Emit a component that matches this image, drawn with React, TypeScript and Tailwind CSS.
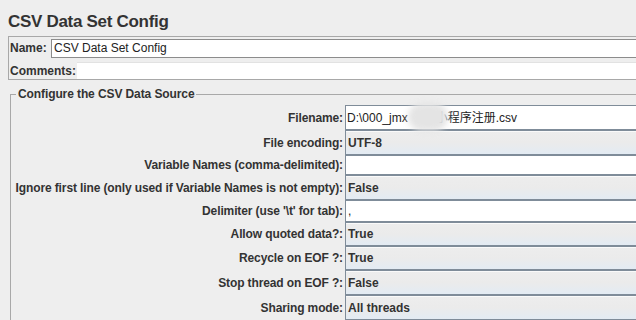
import React from "react";

type Row = {
  label: string;
  value: string;
  kind: "text" | "combo";
  h: string;
};

const rows: Row[] = [
  { label: "File encoding:", value: "UTF-8", kind: "combo", h: "h-[25px]" },
  { label: "Variable Names (comma-delimited):", value: "", kind: "text", h: "h-[20px]" },
  { label: "Ignore first line (only used if Variable Names is not empty):", value: "False", kind: "combo", h: "h-[25px]" },
  { label: "Delimiter (use '\\t' for tab):", value: ",", kind: "text", h: "h-[22px]" },
  { label: "Allow quoted data?:", value: "True", kind: "combo", h: "h-[24px]" },
  { label: "Recycle on EOF ?:", value: "True", kind: "combo", h: "h-[24px]" },
  { label: "Stop thread on EOF ?:", value: "False", kind: "combo", h: "h-[25px]" },
  { label: "Sharing mode:", value: "All threads", kind: "combo", h: "h-[25px]" },
];

const font = "font-['Liberation_Sans','Noto_Sans_CJK_SC',sans-serif]";

function Label({ children, h }: { children: React.ReactNode; h: string }) {
  return (
    <div className={`${h} flex items-center justify-end pr-[2px] text-[12px] font-bold tracking-[-0.12px] text-[#333] whitespace-nowrap`}>
      {children}
    </div>
  );
}

export default function App() {
  return (
    <div className={`w-[636px] h-[320px] overflow-hidden bg-[#eeeeee] ${font}`}>
      <div className="w-[680px]">
        <div className="h-[36px] pt-[10px] pl-[8px] text-[17px] leading-[24px] font-bold tracking-[-0.3px] text-[#333]">
          CSV Data Set Config
        </div>

        {/* name / comments */}
        <div className="ml-[8px] h-[44px] border border-r-0 border-[#a8a8a8]">
          <div className="h-[21px] flex items-center pt-[1px]">
            <span className="pl-[1px] w-[42px] text-[12px] font-bold text-[#333]">Name:</span>
            <div className="flex-1 h-[19px] border-y border-l border-[#8c8c8c] bg-white flex items-center pl-[2px] text-[12px] text-[#222]">
              CSV Data Set Config
            </div>
          </div>
          <div className="h-[21px] flex items-end">
            <span className="pl-[1px] w-[68px] pb-[1px] text-[12px] leading-[14px] font-bold text-[#333]">Comments:</span>
            <div className="flex-1 h-[17px] border-t border-[#e2e2e2] bg-white" />
          </div>
        </div>

        {/* csv data source */}
        <fieldset className="ml-[10px] mt-[7px] border border-r-0 border-[#a8a8a8]">
          <legend className="ml-[5px] px-[2px] text-[12px] leading-[14px] font-bold tracking-[-0.1px] text-[#333]">
            Configure the CSV Data Source
          </legend>
          <div className="pt-[4px] grid grid-cols-[334px_1fr]">
            <Label h="h-[25px]">Filename:</Label>
            <div className="relative h-[25px] border border-r-0 border-[#7f8c99] bg-white flex items-center pl-[1px] text-[12px] text-[#222] whitespace-nowrap">
              <span>D:\000_jmx</span>
              <span className="ml-[28px]">小程序注册.csv</span>
              <span className="absolute left-[62px] top-[-3px] w-[40px] h-[28px] rounded-full bg-[#e4e4e4] blur-[3px]" />
            </div>
            {rows.map((r) => (
              <React.Fragment key={r.label}>
                <Label h={r.h}>{r.label}</Label>
                {r.kind === "text" ? (
                  <div className={`${r.h} border border-r-0 border-[#7f8c99] bg-white flex items-center pl-[2px] text-[12px] text-[#222]`}>
                    {r.value}
                  </div>
                ) : (
                  <div className={`${r.h} border border-r-0 border-[#7f8c99] bg-gradient-to-b from-[#ededed] via-[#ebebeb] to-[#e3ebf3] shadow-[inset_0_1px_0_#fafafa] flex items-center pl-[2px] text-[12px] font-bold text-[#333]`}>
                    {r.value}
                  </div>
                )}
              </React.Fragment>
            ))}
          </div>
        </fieldset>
      </div>
    </div>
  );
}
